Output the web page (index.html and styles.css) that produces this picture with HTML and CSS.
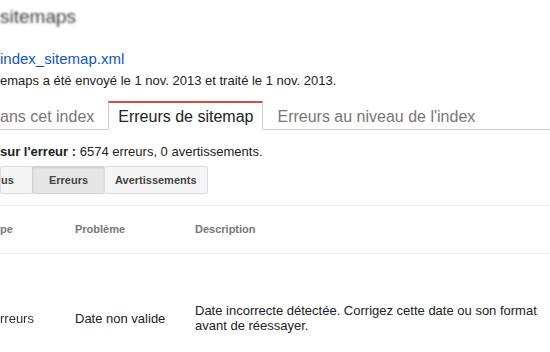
FILE: index.html
```html
<!DOCTYPE html>
<html lang="fr">
<head>
    <meta charset="UTF-8">
    <title>Sitemaps - Erreurs de sitemap</title>
    <link rel="stylesheet" href="styles.css">
</head>
<body>

<div class="page">
    <h1 class="titre">sitemaps</h1>

    <a class="lien-sitemap" href="#">index_sitemap.xml</a>
    <p class="statut">emaps a été envoyé le 1 nov. 2013 et traité le 1 nov. 2013.</p>

    <!-- Onglets -->
    <div class="onglets">
        <div class="onglet">ans cet index</div>
        <div class="onglet actif">Erreurs de sitemap</div>
        <div class="onglet">Erreurs au niveau de l'index</div>
    </div>

    <p class="resume"><b>sur l'erreur :</b> 6574 erreurs, 0 avertissements.</p>

    <div class="filtres">
        <button class="filtre premier">us</button>
        <button class="filtre choisi">Erreurs</button>
        <button class="filtre">Avertissements</button>
    </div>

    <!-- Tableau des erreurs -->
    <div class="tableau">
        <div class="ligne entete">
            <div>pe</div>
            <div>Problème</div>
            <div>Description</div>
        </div>
        <div class="ligne donnees">
            <div class="flou">rreurs</div>
            <div>Date non valide</div>
            <div>Date incorrecte détectée. Corrigez cette date ou son format avant de réessayer.</div>
        </div>
    </div>
</div>

</body>
</html>
```

FILE: styles.css
```css
body {
    margin: 0;
    font-family: "Liberation Sans", Arial, sans-serif;
    color: #222;
    background-color: #fff;
    overflow: hidden;
}
.page {
    width: 550px;
    height: 352px;
    overflow: hidden;
}
.titre {
    margin: 0;
    padding-top: 2px;
    height: 47px;
    font-size: 19px;
    font-weight: normal;
    line-height: 30px;
    color: #3a3a3a;
    filter: blur(0.8px);
}
.lien-sitemap {
    display: block;
    font-size: 15px;
    line-height: 20px;
    color: #1155cc;
    text-decoration: none;
}
.statut {
    margin: 4px 0 0;
    font-size: 13px;
    line-height: 16px;
}
/* Onglets */
.onglets {
    display: flex;
    gap: 4px;
    margin: 12px 0 0 -10px;
    border-bottom: 1px solid #ccc;
}
.onglet {
    padding: 4px 9px 2px;
    margin-bottom: -1px;
    font-size: 16px;
    line-height: 20px;
    color: #777;
    white-space: nowrap;
    border: 1px solid transparent;
    border-top: 2px solid transparent;
}
.onglet.actif {
    color: #222;
    background-color: #fff;
    border-color: #ccc;
    border-top-color: #dd4b39;
    border-bottom-color: #fff;
}
.resume {
    margin: 14px 0 0;
    font-size: 13px;
    line-height: 16px;
}
/* Boutons de filtre */
.filtres {
    display: flex;
    margin-top: 6px;
    padding-bottom: 11px;
    border-bottom: 1px solid #ebebeb;
}
.filtre {
    height: 28px;
    padding: 0 10px;
    margin: 0;
    margin-right: -1px;
    font-family: inherit;
    font-size: 11px;
    font-weight: bold;
    line-height: 26px;
    color: #444;
    background-color: #f5f5f5;
    border: 1px solid #dcdcdc;
    border-radius: 2px;
}
.filtre.premier {
    padding-left: 0;
    width: 33px;
    text-align: left;
}
.filtre.choisi {
    min-width: 73px;
    background-color: #e6e6e6;
    border-color: #d0d0d0;
    box-shadow: inset 0 1px 2px rgba(0, 0, 0, 0.1);
}
/* Tableau */
.ligne {
    display: grid;
    grid-template-columns: 75px 120px 1fr;
    align-items: center;
    border-bottom: 1px solid #ebebeb;
}
.entete {
    height: 47px;
    font-size: 11px;
    font-weight: bold;
    line-height: 13px;
    color: #777;
}
.donnees {
    height: 128px;
    font-size: 13px;
    line-height: 15px;
    border-bottom: none;
}
.donnees div:last-child {
    padding-right: 10px;
}
.flou {
    color: #333;
    filter: blur(0.6px);
}
```
